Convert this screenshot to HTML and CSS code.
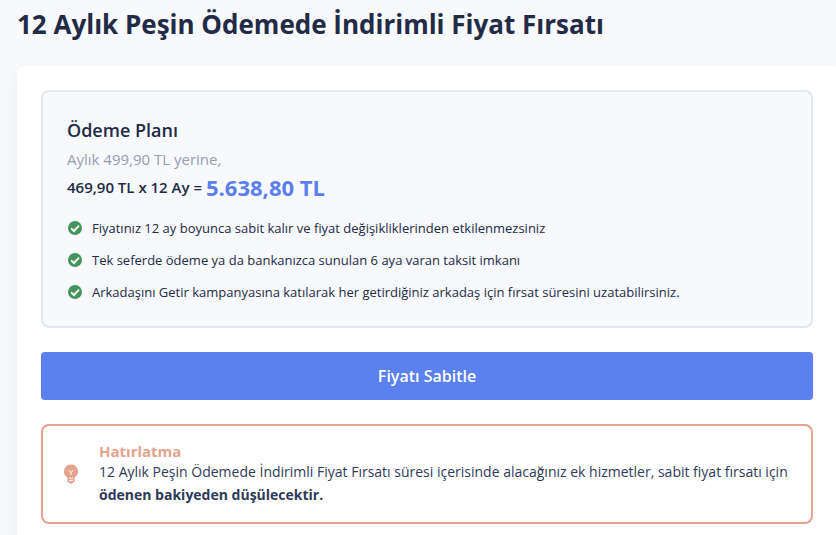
FILE: index.html
```html
<!DOCTYPE html>
<html lang="tr">
<head>
    <meta charset="UTF-8">
    <meta name="viewport" content="width=device-width, initial-scale=1.0">
    <title>12 Aylık Peşin Ödemede İndirimli Fiyat Fırsatı</title>
    <link rel="stylesheet" href="styles.css">
</head>
<body>

    <main>
        <h1 class="title">12 Aylık Peşin Ödemede İndirimli Fiyat Fırsatı</h1>

        <div class="card">
            <div class="plan">
                <h2>Ödeme Planı</h2>
                <p class="old-price">Aylık 499,90 TL yerine,</p>
                <p class="new-price">469,90 TL x 12 Ay = <span class="total">5.638,80 TL</span></p>
                <ul class="features">
                    <li>
                        <svg class="check" viewBox="0 0 16 16" aria-hidden="true"><circle cx="8" cy="8" r="7"/><path d="M4.2 8.3L7 11L12 5.6"/></svg>
                        Fiyatınız 12 ay boyunca sabit kalır ve fiyat değişikliklerinden etkilenmezsiniz
                    </li>
                    <li>
                        <svg class="check" viewBox="0 0 16 16" aria-hidden="true"><circle cx="8" cy="8" r="7"/><path d="M4.2 8.3L7 11L12 5.6"/></svg>
                        Tek seferde ödeme ya da bankanızca sunulan 6 aya varan taksit imkanı
                    </li>
                    <li>
                        <svg class="check" viewBox="0 0 16 16" aria-hidden="true"><circle cx="8" cy="8" r="7"/><path d="M4.2 8.3L7 11L12 5.6"/></svg>
                        Arkadaşını Getir kampanyasına katılarak her getirdiğiniz arkadaş için fırsat süresini uzatabilirsiniz.
                    </li>
                </ul>
            </div>

            <button type="button" class="btn">Fiyatı Sabitle</button>

            <div class="reminder">
                <svg class="bulb" viewBox="0 0 16 20" aria-hidden="true">
                    <path class="glass" d="M8 .5A7 7 0 0 0 3.8 13.1c.5.4.7.8.7 1.4h7c0-.6.2-1 .7-1.4A7 7 0 0 0 8 .5z"/>
                    <path class="glass" d="M4.5 14h7v3.2a1.3 1.3 0 0 1-1.3 1.3H9.8a1.8 1.3 0 0 1-3.6 0h-.4a1.3 1.3 0 0 1-1.3-1.3z"/>
                    <path class="line" d="M5.7 6.2L8 8.6l2.3-2.4M8 8.6v2.4M6 14.2h4M6 16.6h4"/>
                </svg>
                <div class="reminder-text">
                    <h3>Hatırlatma</h3>
                    <p>12 Aylık Peşin Ödemede İndirimli Fiyat Fırsatı süresi içerisinde alacağınız ek hizmetler, sabit fiyat fırsatı için <strong>ödenen bakiyeden düşülecektir.</strong></p>
                </div>
            </div>
        </div>
    </main>

</body>
</html>
```
FILE: styles.css
```css
* {
    box-sizing: border-box;
}
body {
    font-family: "Open Sans", "Noto Sans", sans-serif;
    margin: 0;
    background-color: #f8f9fd;
    color: #222b45;
}
h1, h2, h3, p, ul {
    margin: 0;
    padding: 0;
}
main {
    padding: 6px 0 0 17px;
}
.title {
    font-size: 26px;
    line-height: 36px;
    font-weight: 700;
    margin-bottom: 24px;
}
.card {
    background-color: #fff;
    padding: 24px 23px 24px 24px;
    border-radius: 8px 0 0 8px;
    box-shadow: 0 8px 16px rgba(44, 51, 73, 0.06);
}
.plan {
    background-color: #f8f9fd;
    border: 2px solid #e4e7f0;
    border-radius: 8px;
    padding: 24px;
}
.plan h2 {
    font-size: 18px;
    line-height: 28px;
    font-weight: 600;
}
.old-price {
    font-size: 15px;
    line-height: 30px;
    color: #979eb0;
}
.new-price {
    display: flex;
    align-items: center;
    gap: 4px;
    font-size: 15px;
    line-height: 26px;
    font-weight: 600;
}
.total {
    font-size: 22px;
    font-weight: 700;
    color: #5b7fee;
}
.features {
    list-style: none;
    margin-top: 18px;
    display: flex;
    flex-direction: column;
    gap: 12px;
}
.features li {
    display: flex;
    align-items: center;
    gap: 9px;
    font-size: 13px;
    line-height: 20px;
}
.check {
    width: 16px;
    height: 16px;
    flex: none;
    fill: #43935a;
}
.check path {
    fill: none;
    stroke: #fff;
    stroke-width: 2;
}
.btn {
    display: block;
    width: 100%;
    margin: 24px 0;
    padding: 12px;
    border: none;
    border-radius: 4px;
    background-color: #5b80ef;
    color: #fff;
    font-family: inherit;
    font-size: 16px;
    line-height: 24px;
    font-weight: 600;
    cursor: pointer;
}
.reminder {
    display: flex;
    align-items: center;
    gap: 20px;
    padding: 16px 20px;
    border: 2px solid #e2a48d;
    border-radius: 8px;
}
.bulb {
    width: 16px;
    height: 20px;
    flex: none;
}
.bulb .glass {
    fill: #e2a48d;
}
.bulb .line {
    fill: none;
    stroke: #fff;
    stroke-width: 1;
}
.reminder h3 {
    font-size: 15px;
    line-height: 18px;
    font-weight: 700;
    color: #e2a48d;
}
.reminder p {
    font-size: 14px;
    line-height: 23px;
    color: #2e3a59;
}
```
